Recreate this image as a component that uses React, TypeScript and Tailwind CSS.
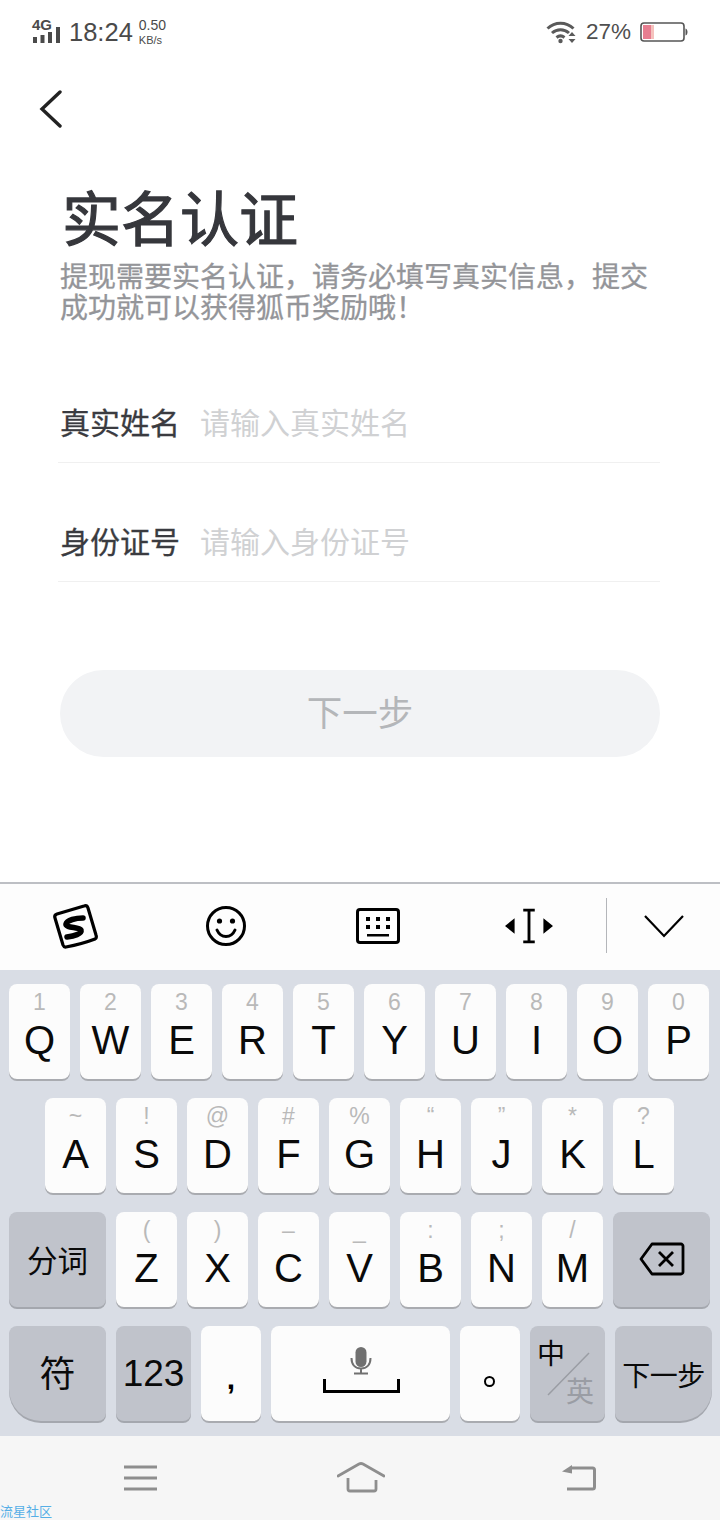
const SANS = 'font-["Liberation_Sans","Noto_Sans_CJK_SC",sans-serif]';

const ROW1 = [
  ['1', 'Q'], ['2', 'W'], ['3', 'E'], ['4', 'R'], ['5', 'T'],
  ['6', 'Y'], ['7', 'U'], ['8', 'I'], ['9', 'O'], ['0', 'P'],
];
const ROW2 = [
  ['~', 'A'], ['!', 'S'], ['@', 'D'], ['#', 'F'], ['%', 'G'],
  ['“', 'H'], ['”', 'J'], ['*', 'K'], ['?', 'L'],
];
const ROW3 = [
  ['(', 'Z'], [')', 'X'], ['–', 'C'], ['_', 'V'], [':', 'B'], [';', 'N'], ['/', 'M'],
];

function LetterKey({ hint, letter }: { hint: string; letter: string }) {
  return (
    <div className="flex h-[95px] w-[61px] shrink-0 flex-col items-center rounded-[8px] bg-[#fcfcfc] pt-[3px] shadow-[0_2px_0_#a9abb0]">
      <span className="h-[30px] text-[23px] leading-[30px] text-[#b9b9b9]">{hint}</span>
      <span className="text-[40px] leading-[46px] text-[#0a0a0a]">{letter}</span>
    </div>
  );
}

function GrayKey({ className, children }: { className: string; children: React.ReactNode }) {
  return (
    <div className={`flex h-[95px] shrink-0 items-center justify-center bg-[#c0c3cb] text-[#0a0a0a] shadow-[0_2px_0_#a4a7ae] ${className}`}>
      {children}
    </div>
  );
}

function StatusBar() {
  return (
    <div className="flex h-[62px] items-center justify-between pl-[32px] pr-[32px] pt-[2px]">
      <div className="flex items-center">
        <div className="flex w-[29px] flex-col pb-[3px]">
          <span className="text-[15px] font-bold leading-[14px] text-[#4a4a4a]">4G</span>
          <svg width="29" height="16" viewBox="0 0 29 16" className="mt-[-5px]" fill="#4a4a4a">
            <rect x="1" y="10" width="4" height="6" />
            <rect x="8.500" y="8" width="4" height="8" />
            <rect x="16" y="5" width="4" height="11" />
            <rect x="24" y="0" width="4" height="16" />
          </svg>
        </div>
        <span className="ml-[8px] text-[25.500px] leading-[30px] text-[#4a4a4a]">18:24</span>
        <div className="ml-[6px] flex flex-col text-[#4a4a4a]">
          <span className="text-[14px] leading-[15px]">0.50</span>
          <span className="text-[11px] leading-[14px]">KB/s</span>
        </div>
      </div>
      <div className="flex items-center">
        <svg width="31" height="24" viewBox="0 0 31 24" fill="none" stroke="#5a5a5a" strokeWidth="3">
          <path d="M1.500 8.500C9 1.500 20 1.500 27.500 8.500" />
          <path d="M6 13C11 8.500 18 8.500 23 13" />
          <path d="M10.500 17.500C13 15.500 16 15.500 18.500 17.500" />
          <circle cx="14.500" cy="21" r="2.200" fill="#5a5a5a" stroke="none" />
          <path d="M26 12l3.500 4h-7zM26 23l3.500-4h-7z" fill="#5a5a5a" stroke="none" />
        </svg>
        <span className="ml-[9px] text-[22.500px] leading-[30px] text-[#4f4f4f]">27%</span>
        <svg width="48" height="20" viewBox="0 0 48 20" className="ml-[9px]" fill="none">
          <rect x="1" y="1" width="43" height="18" rx="3" fill="#fff" stroke="#555" strokeWidth="1.600" />
          <rect x="3" y="3" width="8" height="14" fill="#e77d90" />
          <rect x="11" y="3" width="3" height="14" fill="#f5c2bd" />
          <path d="M45.500 6.500c1.500.5 2 2 2 3.500s-.5 3-2 3.500z" fill="#555" />
        </svg>
      </div>
    </div>
  );
}

function FormRow({ label, placeholder }: { label: string; placeholder: string }) {
  return (
    <div className="flex h-[85px] items-center border-b border-[#f0f0f0] pl-[2px] pt-[7px]">
      <span className="w-[141px] text-[30px] leading-[36px] text-[#3a3b40] [-webkit-text-stroke:0.300px_#3a3b40]">{label}</span>
      <span className="ml-[-1px] text-[30px] leading-[36px] text-[#d0d1d3]">{placeholder}</span>
    </div>
  );
}

function Toolbar() {
  return (
    <div className="flex h-[88px] items-center border-t-2 border-[#bdbfc4] bg-[#fdfdfd] pb-[3px]">
      <div className="flex w-[150px] justify-center">
        <svg width="46" height="46" viewBox="0 0 46 46" fill="none" stroke="#000" strokeWidth="3.200" strokeLinejoin="round">
          <path d="M3 15q-1-3 2-4L32 3q3-1 4 2L44 32q1 3-1 4Q30 41 14 44q-2 .5-3-2z" />
          <path d="M31 15C24 15 15 17 14 21C13 25 27 24 29 27C30 31 22 33 15 34" strokeWidth="5.500" strokeLinecap="round" />
        </svg>
      </div>
      <div className="flex w-[152px] justify-center">
        <svg width="42" height="42" viewBox="0 0 42 42" fill="none" stroke="#000" strokeWidth="3">
          <circle cx="21" cy="21" r="18.500" />
          <circle cx="14.500" cy="16" r="2.600" fill="#000" stroke="none" />
          <circle cx="27.500" cy="16" r="2.600" fill="#000" stroke="none" />
          <path d="M12 25c2 4.500 5.500 6.500 9 6.500s7-2 9-6.500" strokeLinecap="round" />
        </svg>
      </div>
      <div className="flex w-[152px] justify-center">
        <svg width="44" height="36" viewBox="0 0 44 36" fill="none">
          <rect x="1.500" y="1.500" width="41" height="33" rx="2.500" stroke="#000" strokeWidth="3" />
          <path d="M10 9h4v4h-4zM20 9h4v4h-4zM30 9h4v4h-4zM10 17h4v4h-4zM20 17h4v4h-4zM30 17h4v4h-4zM11 26h22v2.500H11z" fill="#000" />
        </svg>
      </div>
      <div className="flex w-[152px] justify-center pr-[2px]">
        <svg width="48" height="36" viewBox="0 0 50 36" fill="#000">
          <path d="M0 18l10-8v16zM50 18l-10-8v16z" />
          <path d="M19 1.500h12M25 1.500v33M19 34.500h12" stroke="#000" strokeWidth="3" />
        </svg>
      </div>
      <div className="h-[55px] w-px bg-[#b4b6ba]" />
      <div className="flex flex-1 justify-center">
        <svg width="40" height="24" viewBox="0 0 40 24" fill="none" stroke="#000" strokeWidth="2.200">
          <path d="M1 2l19 20L39 2" />
        </svg>
      </div>
    </div>
  );
}

function Keyboard() {
  return (
    <div className={`flex h-[466px] flex-col gap-[19px] bg-[#d9dde5] pl-[9px] pt-[14px] ${SANS}`}>
      <div className="flex gap-[10px]">
        {ROW1.map(([h, l]) => (
          <LetterKey key={l} hint={h} letter={l} />
        ))}
      </div>
      <div className="flex gap-[10px] pl-[36px]">
        {ROW2.map(([h, l]) => (
          <LetterKey key={l} hint={h} letter={l} />
        ))}
      </div>
      <div className="flex gap-[10px]">
        <GrayKey className="w-[97px] rounded-[8px] pt-[4px] text-[30.500px]">分词</GrayKey>
        {ROW3.map(([h, l]) => (
          <LetterKey key={l} hint={h} letter={l} />
        ))}
        <GrayKey className="w-[97px] rounded-[8px] pb-[2px]">
          <svg width="46" height="34" viewBox="0 0 46 34" fill="none" stroke="#000" strokeWidth="2.800" strokeLinejoin="round">
            <path d="M13 2h29c1 0 2 1 2 2v26c0 1-1 2-2 2H13L2 17z" />
            <path d="M20 10l14 14M34 10L20 24" />
          </svg>
        </GrayKey>
      </div>
      <div className="flex gap-[10px]">
        <GrayKey className="w-[97px] rounded-[8px] rounded-bl-[32px] pt-[2px] text-[36px]">符</GrayKey>
        <GrayKey className="w-[75px] rounded-[8px] text-[37px]">123</GrayKey>
        <div className="flex h-[95px] w-[60px] items-center justify-center rounded-[8px] bg-[#fcfcfc] pt-[10px] text-[30px] font-bold text-black shadow-[0_2px_0_#a9abb0]">,</div>
        <div className="flex h-[95px] w-[179px] flex-col items-center rounded-[8px] bg-[#fcfcfc] pt-[20px] shadow-[0_2px_0_#a9abb0]">
          <svg width="24" height="30" viewBox="0 0 24 30" fill="none" stroke="#707070" strokeWidth="2">
            <rect x="6.500" y="1" width="11" height="20" rx="5.500" fill="#707070" stroke="none" />
            <path d="M2.500 12c0 7 4 10.500 9.500 10.500s9.500-3.500 9.500-10.500M12 22v5M5 27.500h14" />
          </svg>
          <div className="ml-[1px] mt-[3px] h-[14px] w-[77px] border-x-[3px] border-b-[3px] border-black" />
        </div>
        <div className="flex h-[95px] w-[60px] items-center justify-center rounded-[8px] bg-[#fcfcfc] pt-[16px] shadow-[0_2px_0_#a9abb0]">
          <div className="mr-[2px] h-[11px] w-[11px] rounded-full border-2 border-black" />
        </div>
        <GrayKey className="relative w-[75px] rounded-[8px]">
          <span className="absolute left-[7px] top-[12px] text-[28px] leading-[34px] text-[#0a0a0a]">中</span>
          <svg width="44" height="44" viewBox="0 0 44 44" className="absolute left-[17px] top-[26px]" stroke="#9a9da4" strokeWidth="1.500">
            <path d="M42 1L1 43" />
          </svg>
          <span className="absolute left-[36px] top-[50px] text-[28px] leading-[34px] text-[#9a9da4]">英</span>
        </GrayKey>
        <GrayKey className="w-[97px] rounded-[8px] rounded-br-[32px] pt-[6px] text-[28px] tracking-[-0.500px]">下一步</GrayKey>
      </div>
    </div>
  );
}

function NavBar() {
  return (
    <div className="relative flex h-[84px] bg-[#f6f6f6] pt-[24px]">
      <div className="flex w-[281px] justify-center pr-[2px] pt-[3px]">
        <svg width="34" height="28" viewBox="0 0 34 28" stroke="#8e8e8e" strokeWidth="3">
          <path d="M1 4h33M1 15h33M1 26h33" />
        </svg>
      </div>
      <div className="flex w-[160px] justify-center">
        <svg width="48" height="33" viewBox="0 0 48 33" fill="none" stroke="#8e8e8e" strokeWidth="2.800">
          <path d="M1 16L22 4q2-1 4 0L47 16" strokeLinecap="round" />
          <path d="M11 18v11q0 2 2 2h24q2 0 2-2v-9" />
        </svg>
      </div>
      <div className="flex w-[276px] justify-center pt-[3px]">
        <svg width="36" height="30" viewBox="0 0 36 30" fill="none" stroke="#8e8e8e" strokeWidth="3">
          <path d="M11 5h20.500q2 0 2 2v17q0 2-2 2H6" />
          <path d="M1 8.500l10-6.500v8.500z" fill="#8e8e8e" stroke="none" />
        </svg>
      </div>
      <span className="absolute bottom-0 left-0 text-[13px] leading-[17px] text-[#55aee6]">流星社区</span>
    </div>
  );
}

export default function App() {
  return (
    <div className={`h-[1520px] w-[720px] overflow-hidden bg-white ${SANS}`}>
      <StatusBar />
      <div className="h-[820px]">
        <div className="pl-[39px] pt-[28px]">
          <svg width="24" height="38" viewBox="0 0 24 38" fill="none" stroke="#222" strokeWidth="3.400" strokeLinecap="round">
            <path d="M21 2L3 19l18 17" />
          </svg>
        </div>
        <div className="pl-[60px] pr-[60px] pt-[58px]">
          <h1 className="pl-[2px] text-[59px] font-normal leading-[70px] text-[#36373c] [-webkit-text-stroke:1.200px_#36373c]">实名认证</h1>
          <p className="mt-[6px] w-[600px] text-[28px] leading-[31px] text-[#949599] [-webkit-text-stroke:0.300px_#949599]">
            提现需要实名认证，请务必填写真实信息，提交成功就可以获得狐币奖励哦！
          </p>
          <div className="ml-[-2px] mt-[54px]">
            <FormRow label="真实姓名" placeholder="请输入真实姓名" />
            <div className="mt-[34px]">
              <FormRow label="身份证号" placeholder="请输入身份证号" />
            </div>
          </div>
          <div className="mt-[88px] flex h-[87px] items-center justify-center rounded-full bg-[#f2f3f5] pt-[3px] text-[35.500px] text-[#b4b6b9]">
            下一步
          </div>
        </div>
      </div>
      <Toolbar />
      <Keyboard />
      <NavBar />
    </div>
  );
}
